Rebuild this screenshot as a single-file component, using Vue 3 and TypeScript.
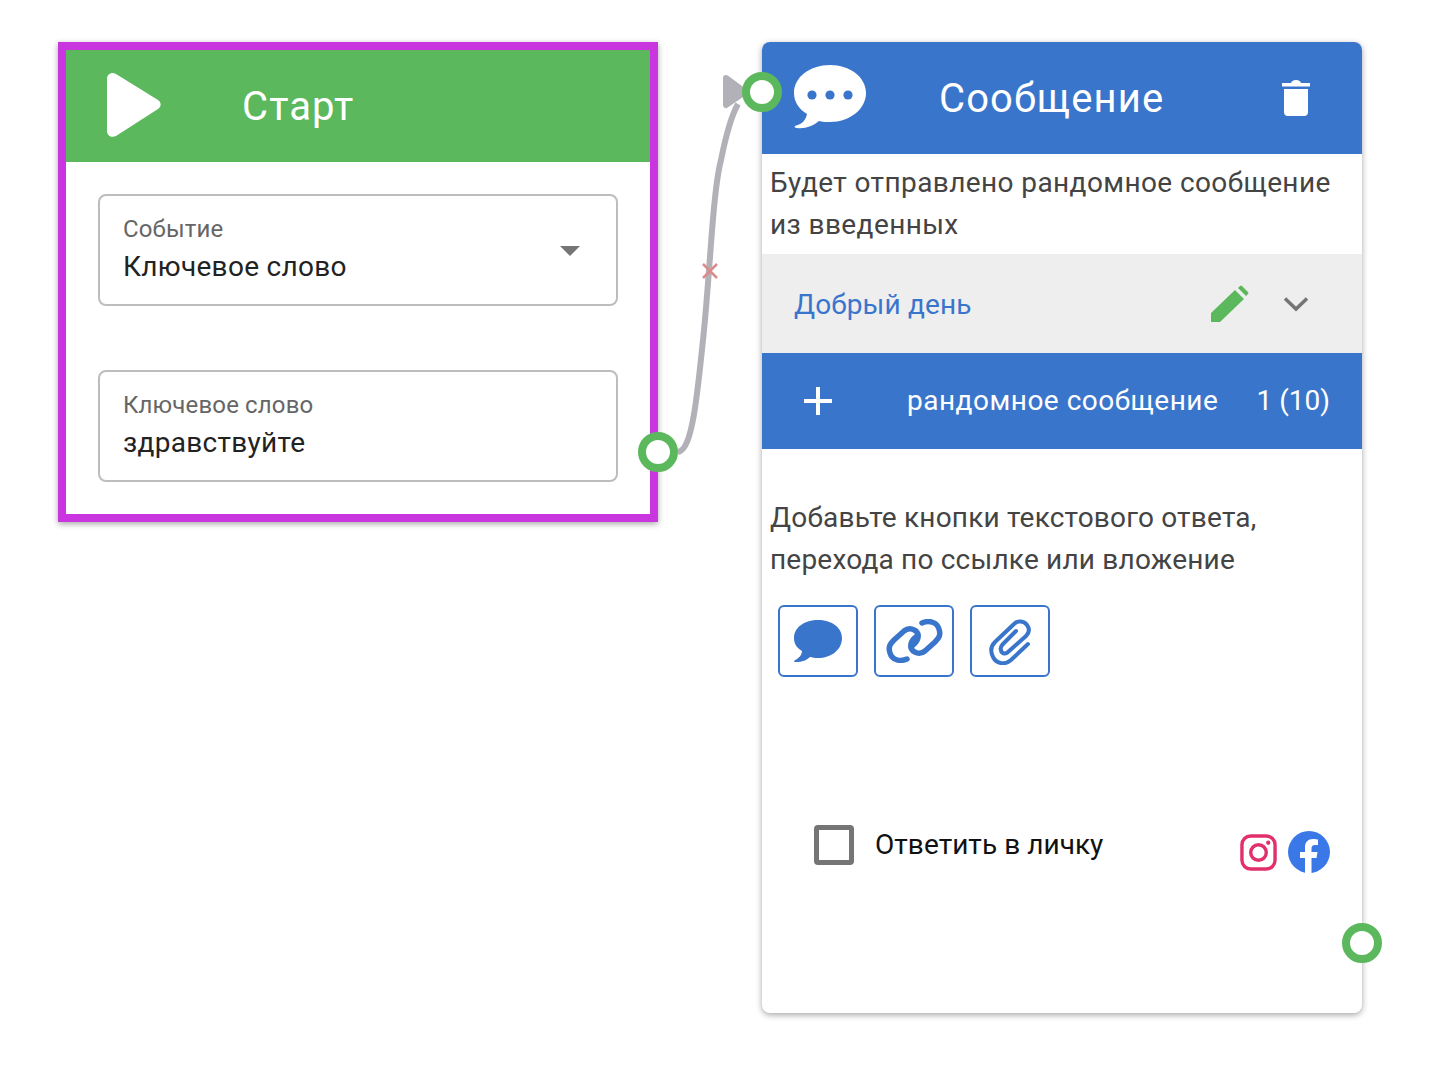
<script setup lang="ts">
const fields = [
  { label: 'Событие', value: 'Ключевое слово', select: true },
  { label: 'Ключевое слово', value: 'здравствуйте', select: false },
]
</script>

<template>
  <div class="canvas">
    <svg class="edge" width="130" height="420" viewBox="0 0 130 420">
      <path d="M58 392C72 390 77 340 84 270C90 210 93 130 101 100C105 80 110 58 118 44" fill="none" stroke="#b1b1b7" stroke-width="6" />
      <path d="M106 18L125 32L106 45Z" fill="#b1b1b7" stroke="#b1b1b7" stroke-width="6" stroke-linejoin="round" />
      <path d="M83 204L97 218M97 204L83 218" stroke="#d98b8e" stroke-width="2.500" />
    </svg>

    <section class="node start">
      <header class="head green">
        <svg class="play" width="54" height="64" viewBox="0 0 54 64">
          <path d="M0 6C0 1 5-1.500 9 1L51 27C54.500 29 54.500 34 51 36L9 63C5 65 0 63 0 58Z" fill="#fff" />
        </svg>
        <h2>Старт</h2>
      </header>
      <div class="fields">
        <div v-for="f in fields" :key="f.label" class="field">
          <div>
            <div class="label">{{ f.label }}</div>
            <div class="value">{{ f.value }}</div>
          </div>
          <span v-if="f.select" class="caret"></span>
        </div>
      </div>
      <span class="handle out"></span>
    </section>

    <section class="node message">
      <span class="handle in"></span>
      <header class="head blue">
        <svg class="bubble" width="72" height="64" viewBox="0 0 72 64">
          <path d="M36 0C16 0 0 12 0 28C0 37 5 44 13 49C12 54 9 59 1 61C0 62 1 63 3 63C11 64 19 61 25 56C28 57 32 57 36 57C56 57 72 44 72 28C72 12 56 0 36 0Z" fill="#fff" />
          <circle cx="18" cy="30" r="4.600" fill="#3a75cc" />
          <circle cx="36" cy="30" r="4.600" fill="#3a75cc" />
          <circle cx="54" cy="30" r="4.600" fill="#3a75cc" />
        </svg>
        <h2>Сообщение</h2>
        <svg class="trash" width="28" height="37" viewBox="0 0 28 37">
          <path d="M0 3H9Q10 0 14 0Q18 0 19 3H28V6.500H0ZM2 9H26V32Q26 36 22 36H6Q2 36 2 32Z" fill="#fff" />
        </svg>
      </header>
      <p class="note top">Будет отправлено рандомное сообщение из введенных</p>
      <div class="reply">
        <span class="reply-text">Добрый день</span>
        <svg class="pencil" width="38" height="38" viewBox="0 0 38 38">
          <path d="M0 28L24 5L33 14L9 37H0ZM27 3L29 1Q30 0 31 1L37 7Q38 8 37 9L35 11Z" fill="#5cb85c" />
        </svg>
        <svg class="chevron" width="26" height="16" viewBox="0 0 26 16">
          <path d="M2 2.500L13 13L24 2.500" fill="none" stroke="#757575" stroke-width="3.500" />
        </svg>
      </div>
      <div class="add">
        <svg class="plus" width="28" height="28" viewBox="0 0 28 28">
          <path d="M0 14H28M14 0V28" stroke="#fff" stroke-width="4" />
        </svg>
        <span class="add-text">рандомное сообщение</span>
        <span class="count">1 (10)</span>
      </div>
      <p class="note hint">Добавьте кнопки текстового ответа, перехода по ссылке или вложение</p>
      <div class="buttons">
        <button type="button">
          <svg width="48" height="42" viewBox="0 0 48 42">
            <path d="M24 0C11 0 0 7 0 18C0 24 3 28 8 31C8 35 5 38 0 41C0 42 1 42 2 42C8 42 13 40 16 37C18 37.500 21 38 24 38C37 38 48 30 48 18C48 7 37 0 24 0Z" fill="#3a75cc" />
          </svg>
        </button>
        <button type="button">
          <svg width="57" height="44" viewBox="0 0 57 44" fill="none" stroke="#3a75cc" stroke-width="5.500" stroke-linecap="round">
            <path d="M21 40C14 43 6 41 4 34C2 28 4 25 8 21L18 12C23 8 30 10 32 15C33 20 30 24 26 27" />
            <path d="M36 4C43 1 51 3 53 10C55 16 53 19 49 23L39 32C34 36 27 34 25 29C24 24 27 20 31 17" />
          </svg>
        </button>
        <button type="button">
          <svg width="42" height="47" viewBox="0 0 42 47" fill="none" stroke="#3a75cc" stroke-width="4" stroke-linecap="round">
            <path d="M39 26L22 42C15 48 7 45 4 39C1 33 2 28 6 24L25 6C29 2 35 3 38 7C41 11 40 15 37 18L19 34C16 37 12 35 12 32C11 30 12 28 14 26L27 13" />
          </svg>
        </button>
      </div>
      <div class="direct">
        <label class="check">
          <span class="box"></span>
          <span class="check-text">Ответить в личку</span>
        </label>
        <div class="socials">
          <svg width="37" height="37" viewBox="0 0 38 38">
            <rect x="2" y="2" width="34" height="34" rx="9" fill="none" stroke="#e1306c" stroke-width="3.500" />
            <circle cx="19" cy="19" r="8" fill="none" stroke="#e1306c" stroke-width="3.500" />
            <circle cx="29" cy="9" r="2.200" fill="#e1306c" />
          </svg>
          <svg width="42" height="42" viewBox="0 0 42 42">
            <circle cx="21" cy="21" r="21" fill="#3a78e8" />
            <path d="M17 42V27H12V21H17V16C17 11 20 8 25 8C27 8 29 8.500 30 8.500V14H27C24.500 14 23.500 15.500 23.500 17.500V21H29.500L28.500 27H23.500V42Z" fill="#fff" />
          </svg>
        </div>
      </div>
      <span class="handle bottom"></span>
    </section>
  </div>
</template>

<style scoped>
.canvas {
  position: relative;
  width: 1432px;
  height: 1080px;
  background: #fff;
  overflow: hidden;
  font-family: Roboto, "Noto Sans", sans-serif;
}

.edge {
  position: absolute;
  left: 620px;
  top: 60px;
  z-index: 1;
}

.node {
  position: absolute;
  top: 42px;
  width: 600px;
  box-sizing: border-box;
  background: #fff;
  box-shadow: 0 2px 6px rgba(0, 0, 0, 0.35);
}

.start {
  left: 58px;
  height: 480px;
  border: 8px solid #c936e0;
}

.message {
  left: 762px;
  height: 971px;
  border-radius: 8px;
}

.head {
  height: 112px;
  display: flex;
  align-items: center;
  color: #fff;
}

.head h2 {
  margin: 0;
  font-size: 40px;
  font-weight: 400;
  letter-spacing: 1.1px;
}

.green {
  background: #5cb85c;
  padding-left: 41px;
}

.green h2 {
  margin-left: 81px;
}

.play,
.bubble {
  margin-top: -2px;
}

.blue {
  background: #3a75cc;
  border-radius: 8px 8px 0 0;
  padding-left: 32px;
}

.blue h2 {
  margin-left: 73px;
}

.trash {
  margin-left: auto;
  margin-right: 52px;
}

.fields {
  padding: 32px 32px 0;
  display: flex;
  flex-direction: column;
  gap: 64px;
}

.field {
  height: 112px;
  box-sizing: border-box;
  border: 2px solid #bdbdbd;
  border-radius: 8px;
  padding: 17px 36px 0 23px;
  display: flex;
  justify-content: space-between;
}

.label {
  font-size: 24px;
  line-height: 32px;
  color: #666;
  letter-spacing: 0.15px;
}

.value {
  margin-top: 1px;
  font-size: 28px;
  line-height: 42px;
  color: #222;
  letter-spacing: 0.3px;
}

.caret {
  margin-top: 33px;
  width: 0;
  height: 0;
  border-left: 10px solid transparent;
  border-right: 10px solid transparent;
  border-top: 10px solid #757575;
}

.handle {
  position: absolute;
  width: 40px;
  height: 40px;
  box-sizing: border-box;
  border: 8px solid #5cb85c;
  border-radius: 50%;
  background: #fff;
  z-index: 2;
}

.out {
  left: 572px;
  top: 382px;
}

.in {
  left: -20px;
  top: 30px;
}

.bottom {
  right: -20px;
  top: 881px;
}

.note {
  margin: 0;
  padding: 8px 8px 0;
  font-size: 28px;
  line-height: 42px;
  color: #444;
}

.top {
  height: 92px;
  padding-top: 8px;
  letter-spacing: 0.4px;
}

.reply {
  height: 99px;
  background: #eee;
  display: flex;
  align-items: center;
  padding-left: 32px;
}

.reply-text {
  margin-top: 2px;
  font-size: 28px;
  color: #3a75cc;
  letter-spacing: 0.15px;
}

.pencil {
  margin-left: auto;
  margin-right: 34px;
}

.chevron {
  margin-right: 53px;
}

.add {
  height: 96px;
  background: #3a75cc;
  color: #fff;
  display: flex;
  align-items: center;
  padding-left: 42px;
  font-size: 28px;
}

.add-text {
  margin-left: 75px;
  margin-top: -2px;
  letter-spacing: 0.5px;
}

.count {
  margin-left: auto;
  margin-right: 32px;
  margin-top: -2px;
}

.hint {
  padding-top: 48px;
  letter-spacing: 0.2px;
}

.buttons {
  display: flex;
  gap: 16px;
  padding: 24px 16px 0;
}

.buttons button {
  width: 80px;
  height: 72px;
  padding: 0;
  background: #fff;
  border: 2px solid #3a75cc;
  border-radius: 6px;
  display: flex;
  align-items: center;
  justify-content: center;
}

.direct {
  display: flex;
  justify-content: space-between;
  padding: 148px 32px 0 52px;
}

.check {
  display: flex;
  align-items: center;
  gap: 21px;
  font-size: 28px;
  color: #111;
  height: 40px;
}

.check-text {
  margin-top: -2px;
  letter-spacing: 0.05px;
}

.box {
  width: 40px;
  height: 40px;
  box-sizing: border-box;
  border: 5px solid #757575;
  border-radius: 4px;
}

.socials {
  display: flex;
  align-items: center;
  gap: 11px;
  height: 42px;
  margin-top: 6px;
}
</style>
